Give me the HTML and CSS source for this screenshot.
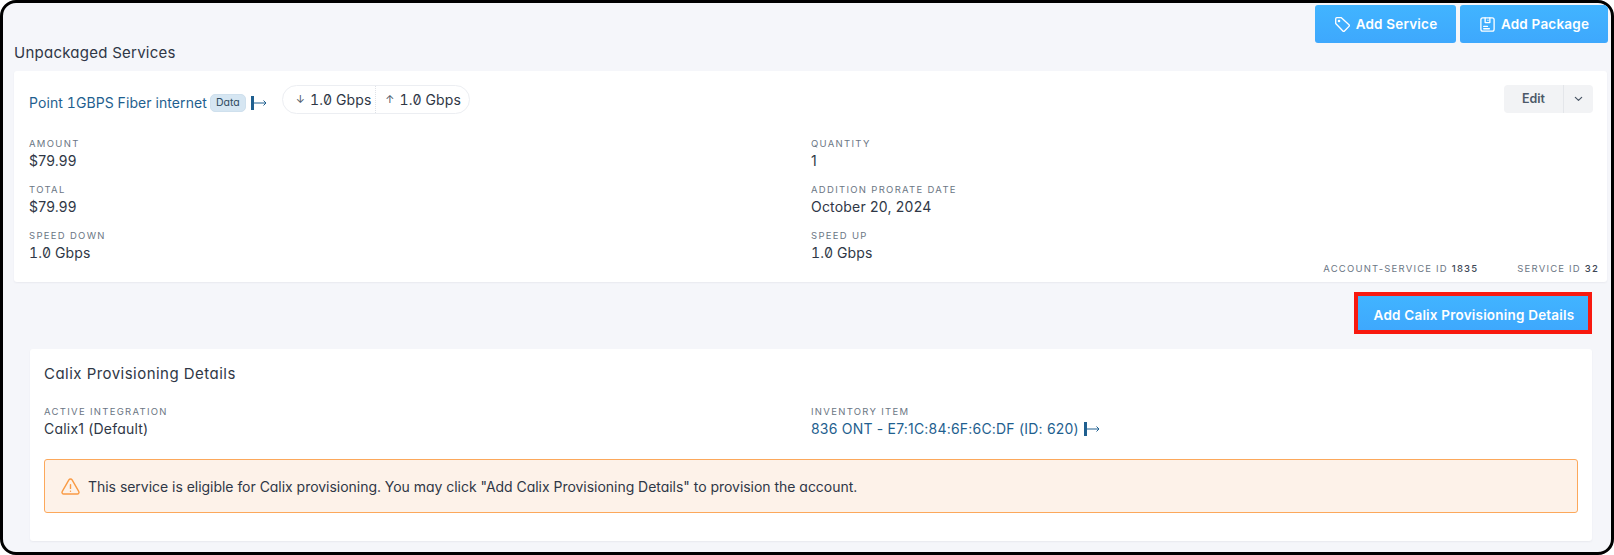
FILE: index.html
```html
<!DOCTYPE html>
<html lang="en">
<head>
<meta charset="utf-8">
<title>Unpackaged Services</title>
<link rel="stylesheet" href="styles.css">
</head>
<body>
<div class="frame">
  <div class="top-actions">
    <button class="btn btn-primary btn-service">
      <svg class="btn-icon" viewBox="0 0 18 18" fill="none" stroke="currentColor" stroke-width="1.4" stroke-linejoin="round" stroke-linecap="round"><path d="M1.8 3v5l7.6 7.9a1.2 1.2 0 0 0 1.7 0l4.8-4.9a1.2 1.2 0 0 0 0-1.7L7.8 1.8H3A1.2 1.2 0 0 0 1.8 3z"/><circle cx="5.3" cy="5.3" r=".7"/></svg>
      Add Service
    </button>
    <button class="btn btn-primary btn-package">
      <svg class="btn-icon" viewBox="0 0 18 18" fill="none" stroke="currentColor" stroke-width="1.4" stroke-linejoin="round" stroke-linecap="round"><rect x="2" y="2" width="14" height="14" rx="2"/><path d="M6.5 2v5h5V2M9.5 4.5h.01M5 11h4M5 13.5h6"/></svg>
      Add Package
    </button>
  </div>
  <h2 class="section-title">Unpackaged Services</h2>

  <section class="card service-card">
    <div class="service-head">
      <a class="link service-name">Point 1GBPS Fiber internet</a>
      <span class="tag">Data</span>
      <svg class="goto goto-head" viewBox="0 0 16 14" fill="none"><path class="goto-bar" d="M1.500 0v14"/><path class="goto-arrow" d="M3 7h12M12.500 4.500 15 7l-2.500 2.500"/></svg>
      <div class="speed-pill">
        <span class="speed"><i class="arrow">↓</i>1.0 Gbps</span>
        <span class="speed speed-up"><i class="arrow">↑</i>1.0 Gbps</span>
      </div>
      <div class="edit-group">
        <button class="edit-btn">Edit</button>
        <button class="edit-caret" aria-label="More">
          <svg viewBox="0 0 10 6" fill="none" stroke="currentColor" stroke-width="1.4" stroke-linecap="round" stroke-linejoin="round"><path d="M1.500 1.200 5 4.500l3.500-3.300"/></svg>
        </button>
      </div>
    </div>
    <div class="details">
      <div class="field"><div class="label">Amount</div><div class="value">$79.99</div></div>
      <div class="field"><div class="label">Quantity</div><div class="value">1</div></div>
      <div class="field"><div class="label">Total</div><div class="value">$79.99</div></div>
      <div class="field"><div class="label">Addition Prorate Date</div><div class="value">October 20, 2024</div></div>
      <div class="field"><div class="label">Speed Down</div><div class="value value-speed">1.0 Gbps</div></div>
      <div class="field"><div class="label">Speed Up</div><div class="value value-speed">1.0 Gbps</div></div>
    </div>
    <div class="ids">
      <span class="id-item">Account-Service ID <b>1835</b></span>
      <span class="id-item">Service ID <b>32</b></span>
    </div>
  </section>

  <div class="provision-actions">
    <button class="btn btn-primary btn-provision">Add Calix Provisioning Details</button>
  </div>

  <section class="card calix-card">
    <h3 class="calix-title">Calix Provisioning Details</h3>
    <div class="details calix-details">
      <div class="field"><div class="label">Active Integration</div><div class="value">Calix1 (Default)</div></div>
      <div class="field"><div class="label">Inventory Item</div><div class="value value-link"><a class="link">836 ONT - E7:1C:84:6F:6C:DF (ID: 620)</a><svg class="goto" viewBox="0 0 16 14" fill="none"><path class="goto-bar" d="M1.500 0v14"/><path class="goto-arrow" d="M3 7h12M12.500 4.500 15 7l-2.500 2.500"/></svg></div></div>
    </div>
    <div class="alert">
      <svg class="alert-icon" viewBox="0 0 20 18" fill="none" stroke="currentColor" stroke-width="1.500" stroke-linecap="round" stroke-linejoin="round"><path d="M8.300 2 1.300 14.200A1.800 1.800 0 0 0 2.900 17h14.200a1.800 1.800 0 0 0 1.600-2.800L11.700 2a2 2 0 0 0-3.400 0z"/><path d="M10 7v4M10 14h.01"/></svg>
      <span>This service is eligible for Calix provisioning. You may click "Add Calix Provisioning Details" to provision the account.</span>
    </div>
  </section>
</div>
</body>
</html>
```

FILE: styles.css
```css
* { box-sizing: border-box; }
html, body { margin: 0; padding: 0; background: #fff; }
body { width: 1614px; height: 555px; overflow: hidden; font-family: Inter, "Liberation Sans", sans-serif; color: #2f3746; font-feature-settings: "cv11"; }
.frame {
  width: 1614px; height: 555px;
  background: #f5f6fa;
  border: 3px solid #000;
  border-radius: 16px;
  padding: 2px 3px 0 11px;
  overflow: hidden;
}
.top-actions { display: flex; justify-content: flex-end; gap: 4px; height: 38px; }
.btn {
  border: 0; font-family: inherit; font-weight: 600; font-size: 13.5px; color: #fff;
  display: inline-flex; align-items: center; justify-content: center; gap: 5px;
  border-radius: 3px; letter-spacing: .2px;
}
.btn-primary { background: linear-gradient(180deg, #41b4ff 0%, #3ea8fd 100%); }
.btn-service { width: 141px; }
.btn-package { width: 148px; }
.btn-icon { width: 17px; height: 17px; }
.section-title { margin: 0; font-size: 15px; font-weight: 400; line-height: 18px; padding-top: 1px; height: 28px; color: #2f3746; letter-spacing: .25px; }
.card { background: #fff; border-radius: 3px; box-shadow: 0 1px 2px rgba(30,40,60,.06); }
.service-card { width: 1593px; height: 211px; padding: 14px 14px 0 15px; position: relative; }
.service-head { display: flex; align-items: center; height: 30px; }
.link { color: #1f5f8f; font-size: 14px; letter-spacing: .2px; }
.service-name { margin-top: 5px; letter-spacing: .08px; font-feature-settings: "tnum", "cv11"; }
.tag {
  margin-left: 3px; margin-top: 6px; background: #d6e6f2; color: #2f4a5f; font-size: 10.5px; line-height: 18px; height: 18px;
  padding: 0 5px; border-radius: 5px; border: 1px solid #cfe0ed; display: inline-flex; align-items: center;
}
.goto { width: 16px; height: 14px; flex: none; margin-left: 5px; display: inline-block; vertical-align: -2px; }
.goto-head { margin-top: 6px; }
.goto-bar { stroke: #1f5f8f; stroke-width: 3; }
.goto-arrow { stroke: #1f5f8f; stroke-width: 1; }
.speed-pill {
  margin-left: 15px; display: flex; align-items: center; height: 29px; border: 1px solid #eceef2; border-radius: 15px; width: 188px;
  font-size: 14px; color: #2f3746; letter-spacing: .1px; font-feature-settings: "zero", "tnum", "cv11"; margin-top: -2px;
}
.speed { display: inline-flex; align-items: center; height: 100%; padding-left: 13px; width: 93px; white-space: nowrap; }
.speed-up { border-left: 1px dotted #dfe2e7; padding-left: 9px; width: 94px; }
.arrow { font-style: normal; font-size: 11px; margin-right: 5px; color: #4a5566; }
.edit-group { margin-left: auto; display: flex; height: 28px; background: #f2f3f5; border-radius: 4px; margin-top: -3px; }
.edit-btn { border: 0; background: none; width: 60px; font: 600 12.5px Inter, sans-serif; color: #4c5868; border-right: 1px solid #e4e6ea; }
.edit-caret { border: 0; background: none; width: 29px; color: #4c5868; display: flex; align-items: center; justify-content: center; padding: 0; }
.edit-caret svg { width: 9px; height: 6px; }
.details { display: grid; grid-template-columns: 782px 1fr; margin-top: 18px; row-gap: 9px; }
.field { height: 37px; }
.label { font-size: 9.5px; line-height: 12px; letter-spacing: 1.3px; color: #6b7684; text-transform: uppercase; margin-top: 5px; }
.value { font-size: 14px; line-height: 18px; letter-spacing: .2px; color: #2f3746; margin-top: 2px; }
.value-speed { font-feature-settings: "zero", "tnum", "cv11"; letter-spacing: .1px; }
.ids { position: absolute; right: 8px; bottom: 7px; display: flex; gap: 39px; }
.id-item { font-size: 9.5px; line-height: 12px; letter-spacing: 1.2px; color: #6b7684; text-transform: uppercase; }
.id-item b { font-weight: 500; color: #3c4654; }
.provision-actions { display: flex; justify-content: flex-end; padding-right: 16px; margin-top: 10px; height: 57px; }
.btn-provision { width: 238px; height: 42px; border: 4px solid #f8190f; border-radius: 0; letter-spacing: .2px; padding: 4px 0 0 2px; }
.calix-card { width: 1562px; margin-left: 16px; height: 192px; padding: 15px 14px 0 14px; }
.calix-title { margin: 0; font-size: 15px; font-weight: 400; line-height: 20px; letter-spacing: .47px; color: #2f3746; }
.calix-details { margin-top: 17px; grid-template-columns: 767px 1fr; }
.alert {
  margin-top: 21px; height: 54px; background: #fdf2e9; border: 1px solid #fca85b; border-radius: 3px;
  display: flex; align-items: center; padding-left: 16px; gap: 8px; font-size: 14px; letter-spacing: -.03px; color: #2f3746;
}
.alert-icon { width: 19px; height: 17px; color: #f99b45; flex: none; }
```
